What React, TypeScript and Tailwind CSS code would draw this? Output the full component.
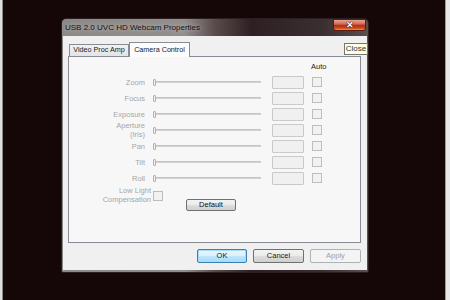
import React from "react";

const rows: { label: string[] }[] = [
  { label: ["Zoom"] },
  { label: ["Focus"] },
  { label: ["Exposure"] },
  { label: ["Aperture", "(Iris)"] },
  { label: ["Pan"] },
  { label: ["Tilt"] },
  { label: ["Roll"] },
];

function Row({ label }: { label: string[] }) {
  return (
    <div className="flex items-center h-[16px]">
      <div className="w-[76px] text-right text-[#a6a6a6] leading-[9px] flex flex-col items-end">
        {label.map((l) => (
          <span key={l}>{l}</span>
        ))}
      </div>
      <div className="ml-[8px] w-[108px] flex items-center">
        <div className="w-[3px] h-[7px] border border-[#b0b0b0] rounded-[1px] bg-[#f4f4f4]" />
        <div className="flex-1 h-[2px] bg-[#d2d2d2] border-t border-[#c4c4c4]" />
      </div>
      <div className="ml-[11px] w-[32px] h-[13px] border border-[#c9c9c9] rounded-[1px] bg-[#f0f0f0]" />
      <div className="ml-[8px] w-[10px] h-[10px] border border-[#bdbdbd] bg-[#f2f2f2]" />
    </div>
  );
}

export default function App() {
  return (
    <div
      className="w-[450px] h-[300px] flex overflow-hidden"
      style={{ fontFamily: '"Liberation Sans", Arial, sans-serif' }}
    >
      <div className="w-[3px] bg-[#dedede] border-r border-[#8a8a8a]" />
      <div className="flex-1 bg-[#150608] pl-[58px] pt-[18px] relative">
        {/* window */}
        <div className="w-[308px] h-[255px] rounded-t-[5px] rounded-b-[2px] border border-[#2a2020] bg-[linear-gradient(to_right,#8e8989_0%,#938e8e_40%,#5a4a4c_50%,#2e2022_62%,#3a2e30_85%,#595050_100%)] flex flex-col px-[1px] pb-[2px]">
          {/* title bar */}
          <div className="h-[17px] flex items-start">
            <div className="pl-[2px] pt-[3px] text-[8px] text-[#111] [text-shadow:0_0_4px_#cfcaca]">
              USB 2.0 UVC HD Webcam Properties
            </div>
            <div className="ml-auto mr-[1px] w-[33px] h-[12px] rounded-b-[3px] border border-[#5a1a10] bg-[linear-gradient(to_bottom,#e6a596_0%,#d46a55_40%,#b8301c_55%,#c8441e_80%,#e8a030_100%)] flex items-center justify-center">
              <span className="text-white font-bold text-[9px] leading-none [text-shadow:0_0_1px_#000,0_0_1px_#000]">
                ✕
              </span>
            </div>
          </div>
          {/* client */}
          <div className="flex-1 bg-[#f0f0f0] flex flex-col pl-[5px] pr-[6px] pt-[6px] pb-[7px] text-[7.5px] text-[#1a1a1a]">
            {/* tabs */}
            <div className="flex items-end h-[14px] pl-[1px]">
              <div className="w-[60px] h-[12px] border border-b-0 border-[#898c95] bg-[linear-gradient(to_bottom,#f2f2f2,#e3e3e3)] flex items-center justify-center text-[7.2px]">
                Video Proc Amp
              </div>
              <div className="w-[61px] h-[15px] -mb-[1px] border border-b-0 border-[#898c95] bg-[#fcfcfc] flex items-center justify-center text-[7.2px] relative z-10">
                Camera Control
              </div>
            </div>
            {/* panel */}
            <div className="h-[187px] border border-[#898c95] bg-[#f7f7f7] pt-[3px]">
              <div className="h-[14px] flex items-center pl-[242px] text-[#1a1a1a]">Auto</div>
              {rows.map((r) => (
                <Row key={r.label[0]} label={r.label} />
              ))}
              <div className="flex items-start">
                <div className="w-[82px] text-right text-[#a6a6a6] leading-[9px] flex flex-col items-end">
                  <span>Low Light</span>
                  <span>Compensation</span>
                </div>
                <div className="ml-[2px] mt-[5px] w-[10px] h-[10px] border border-[#bdbdbd] bg-[#f2f2f2]" />
                <div className="ml-[23px] mt-[13px] w-[50px] h-[12px] rounded-[2px] border border-[#707070] bg-[linear-gradient(to_bottom,#f2f2f2_0%,#ebebeb_50%,#dddddd_51%,#cfcfcf_100%)] flex items-center justify-center text-[#111]">
                  Default
                </div>
              </div>
            </div>
            {/* buttons */}
            <div className="mt-[6px] flex justify-end gap-[6px] h-[14px]">
              <div className="w-[50px] h-[14px] rounded-[2px] border border-[#3c7fb1] bg-[linear-gradient(to_bottom,#eaf6fd_0%,#d9f0fc_50%,#bee6fd_51%,#a7d9f5_100%)] shadow-[inset_0_0_0_1px_#a6dcf8] flex items-center justify-center">
                OK
              </div>
              <div className="w-[51px] h-[14px] rounded-[2px] border border-[#707070] bg-[linear-gradient(to_bottom,#f2f2f2_0%,#ebebeb_50%,#dddddd_51%,#cfcfcf_100%)] flex items-center justify-center">
                Cancel
              </div>
              <div className="w-[51px] h-[14px] rounded-[2px] border border-[#adb2b5] bg-[#f4f4f4] flex items-center justify-center text-[#a0a0a0]">
                Apply
              </div>
            </div>
          </div>
        </div>
        {/* tooltip */}
        <div className="absolute left-[341px] top-[43px] w-[24px] h-[12px] bg-[#ffffe1] border border-[#767676] flex items-center justify-center text-[8px] text-[#333]">
          Close
        </div>
      </div>
      <div className="w-[5px] bg-[#e8e8e8] border-l border-[#9a9a9a]" />
    </div>
  );
}
